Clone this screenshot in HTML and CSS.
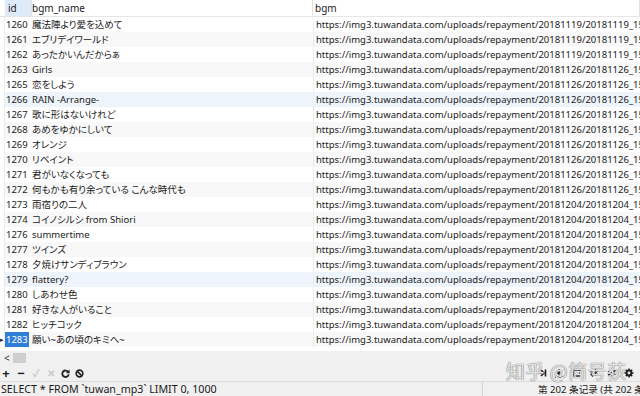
FILE: index.html
```
<!DOCTYPE html>
<html>
<head>
<meta charset="utf-8">
<link rel="stylesheet" href="styles.css">
</head>
<body>
<div class="app">
  <div class="grid">
    <div class="row head">
      <div class="ind"></div>
      <div class="c id sel">id</div>
      <div class="c name">bgm_name</div>
      <div class="c url">bgm</div>
    </div>
    <div class="row"><div class="ind"></div><div class="c id">1260</div><div class="c name">魔法陣より愛を込めて</div><div class="c url">https://img3.tuwandata.com/uploads/repayment/20181119/20181119_1549</div></div>
    <div class="row alt"><div class="ind"></div><div class="c id">1261</div><div class="c name">エブリデイワールド</div><div class="c url">https://img3.tuwandata.com/uploads/repayment/20181119/20181119_1549</div></div>
    <div class="row"><div class="ind"></div><div class="c id">1262</div><div class="c name">あったかいんだからぁ</div><div class="c url">https://img3.tuwandata.com/uploads/repayment/20181119/20181119_1549</div></div>
    <div class="row alt"><div class="ind"></div><div class="c id">1263</div><div class="c name">Girls</div><div class="c url">https://img3.tuwandata.com/uploads/repayment/20181126/20181126_1549</div></div>
    <div class="row"><div class="ind"></div><div class="c id">1265</div><div class="c name">恋をしよう</div><div class="c url">https://img3.tuwandata.com/uploads/repayment/20181126/20181126_1549</div></div>
    <div class="row hl"><div class="ind"></div><div class="c id">1266</div><div class="c name">RAIN -Arrange-</div><div class="c url">https://img3.tuwandata.com/uploads/repayment/20181126/20181126_1549</div></div>
    <div class="row"><div class="ind"></div><div class="c id">1267</div><div class="c name">歌に形はないけれど</div><div class="c url">https://img3.tuwandata.com/uploads/repayment/20181126/20181126_1549</div></div>
    <div class="row alt"><div class="ind"></div><div class="c id">1268</div><div class="c name">あめをゆかにしいて</div><div class="c url">https://img3.tuwandata.com/uploads/repayment/20181126/20181126_1549</div></div>
    <div class="row"><div class="ind"></div><div class="c id">1269</div><div class="c name">オレンジ</div><div class="c url">https://img3.tuwandata.com/uploads/repayment/20181126/20181126_1549</div></div>
    <div class="row alt"><div class="ind"></div><div class="c id">1270</div><div class="c name">リベイント</div><div class="c url">https://img3.tuwandata.com/uploads/repayment/20181126/20181126_1549</div></div>
    <div class="row"><div class="ind"></div><div class="c id">1271</div><div class="c name">君がいなくなっても</div><div class="c url">https://img3.tuwandata.com/uploads/repayment/20181126/20181126_1549</div></div>
    <div class="row alt"><div class="ind"></div><div class="c id">1272</div><div class="c name">何もかも有り余っている こんな時代も</div><div class="c url">https://img3.tuwandata.com/uploads/repayment/20181126/20181126_1549</div></div>
    <div class="row"><div class="ind"></div><div class="c id">1273</div><div class="c name">雨宿りの二人</div><div class="c url">https://img3.tuwandata.com/uploads/repayment/20181204/20181204_1549</div></div>
    <div class="row alt"><div class="ind"></div><div class="c id">1274</div><div class="c name">コイノシルシ from Shiori</div><div class="c url">https://img3.tuwandata.com/uploads/repayment/20181204/20181204_1549</div></div>
    <div class="row"><div class="ind"></div><div class="c id">1276</div><div class="c name">summertime</div><div class="c url">https://img3.tuwandata.com/uploads/repayment/20181204/20181204_1549</div></div>
    <div class="row alt"><div class="ind"></div><div class="c id">1277</div><div class="c name">ツインズ</div><div class="c url">https://img3.tuwandata.com/uploads/repayment/20181204/20181204_1549</div></div>
    <div class="row"><div class="ind"></div><div class="c id">1278</div><div class="c name">夕焼けサンディブラウン</div><div class="c url">https://img3.tuwandata.com/uploads/repayment/20181204/20181204_1549</div></div>
    <div class="row hl"><div class="ind"></div><div class="c id">1279</div><div class="c name">flattery?</div><div class="c url">https://img3.tuwandata.com/uploads/repayment/20181204/20181204_1549</div></div>
    <div class="row"><div class="ind"></div><div class="c id">1280</div><div class="c name">しあわせ色</div><div class="c url">https://img3.tuwandata.com/uploads/repayment/20181204/20181204_1549</div></div>
    <div class="row alt"><div class="ind"></div><div class="c id">1281</div><div class="c name">好きな人がいること</div><div class="c url">https://img3.tuwandata.com/uploads/repayment/20181204/20181204_1549</div></div>
    <div class="row"><div class="ind"></div><div class="c id">1282</div><div class="c name">ヒッチコック</div><div class="c url">https://img3.tuwandata.com/uploads/repayment/20181204/20181204_1549</div></div>
    <div class="row alt"><div class="ind cur">&#9656;</div><div class="c id"><span class="pick">1283</span></div><div class="c name">願い~あの頃のキミへ~</div><div class="c url">https://img3.tuwandata.com/uploads/repayment/20181204/20181204_1549</div></div>
  </div>
  <div class="hscroll">
    <span class="arr">&lt;</span><span class="thumb"></span>
  </div>
  <div class="toolbar">
    <div class="tools">
      <span class="t add">+</span>
      <span class="t del">&minus;</span>
      <span class="t dim">&#10003;</span>
      <span class="t dim">&#10005;</span>
      <svg class="ico" viewBox="0 0 10 10" width="9" height="9"><path d="M8 3.2A3.6 3.6 0 1 0 8.6 6" fill="none" stroke="#222" stroke-width="2"/><path d="M9.6 0.6v4h-4z" fill="#222"/></svg>
      <svg class="ico" viewBox="0 0 10 10" width="9" height="9"><circle cx="5" cy="5" r="3.7" fill="none" stroke="#222" stroke-width="1.8"/><path d="M2.6 2.6l4.8 4.8" stroke="#222" stroke-width="1.8"/></svg>
    </div>
    <div class="right-tools">
      <svg class="ico" viewBox="0 0 10 10" width="10" height="10"><path d="M1 5h6M4 2l3 3-3 3" stroke="#222" stroke-width="1.6" fill="none"/><path d="M8.5 1.5v7" stroke="#222" stroke-width="1.6"/></svg>
      <svg class="ico" viewBox="0 0 10 10" width="10" height="10"><path d="M5 1v5M2.5 3.5L5 6l2.5-2.5M1 9h8" stroke="#222" stroke-width="1.6" fill="none"/></svg>
      <svg class="ico" viewBox="0 0 10 10" width="10" height="10"><path d="M2 2h6v6H2z" fill="none" stroke="#222" stroke-width="1.4"/></svg>
      <svg class="ico" viewBox="0 0 10 10" width="10" height="10"><path d="M1 3.5h7M6 1.5l2 2-2 2M9 6.5H2M4 4.5l-2 2 2 2" stroke="#222" stroke-width="1.3" fill="none"/></svg>
      <svg class="ico" viewBox="0 0 10 10" width="10" height="10"><path d="M1 4c2-2 3 2 5 0s2-1 3-1M1 7c2-2 3 2 5 0s2-1 3-1" stroke="#222" stroke-width="1.4" fill="none"/></svg>
      <svg class="ico" viewBox="0 0 10 10" width="10" height="10"><circle cx="5" cy="5" r="2.4" fill="none" stroke="#222" stroke-width="2"/><path d="M5 0.5v2M5 7.5v2M0.5 5h2M7.5 5h2M1.8 1.8l1.4 1.4M6.8 6.8l1.4 1.4M8.2 1.8L6.8 3.2M3.2 6.8L1.8 8.2" stroke="#222" stroke-width="1.6"/></svg>
    </div>
    <div class="mark">知乎 @简号荻</div>
  </div>
  <div class="status">
    <div class="sql">SELECT * FROM `tuwan_mp3` LIMIT 0, 1000</div>
    <div class="seg"></div>
    <div class="rec">第 202 条记录 (共 202 条)</div>
  </div>
</div>
</body>
</html>
```

FILE: styles.css
```
* { box-sizing: border-box; }
html, body { margin: 0; padding: 0; }
body {
  width: 640px;
  height: 396px;
  overflow: hidden;
  background: #f0f0f0;
  font-family: "Noto Sans", "Noto Sans CJK JP", sans-serif;
  font-size: 9.5px;
  color: #1a1a1a;
}
.app { display: flex; flex-direction: column; height: 396px; }
.grid { background: #fff; height: 351px; overflow: hidden; flex-shrink: 0; }
.row {
  display: grid;
  grid-template-columns: 5px 27px 281px 1fr;
  height: 15px;
  line-height: 15px;
  white-space: nowrap;
}
.row.alt { background: #f8f8f8; }
.row.hl { background: #eef4fb; }
.row.head { height: 17px; line-height: 17px; background: #fff; border-bottom: 1px solid #e6e6e6; font-size: 10px; }
.head .c { border-right: 1px solid #e2e2e2; }
.head .c.sel { background: #dfeaf8; padding-left: 3px; }
.c { overflow: hidden; padding-left: 1px; }
.c.name { padding-left: 0; font-feature-settings: "palt"; }
.c.url { padding-left: 2px; border-left: 1px solid #ececec; }
.head .c.url { border-left: none; }
.ind { background: #fff; font-size: 7px; color: #222; line-height: 15px; border-right: 1px solid #ececec; }
.head .ind { border-right: none; }
.pick { background: #2f7fd6; color: #fff; display: inline-block; padding: 0 1px; margin-left: -1px; }
.hscroll {
  height: 14px;
  display: flex;
  align-items: center;
  gap: 3px;
  padding-left: 4px;
  color: #333;
}
.arr { font-size: 10px; }
.thumb { width: 13px; height: 10px; background: #cfcfcf; }
.toolbar {
  height: 16px;
  display: flex;
  align-items: center;
  justify-content: space-between;
  padding: 0 6px 0 1px;
  position: relative;
}
.tools { display: flex; align-items: center; gap: 5px; }
.t { font-size: 13px; font-weight: bold; width: 10px; text-align: center; line-height: 14px; }
.t.dim { color: #c8c8c8; font-size: 10px; }
.right-tools { display: flex; align-items: center; gap: 7.5px; }
.mark {
  position: absolute;
  left: 506px;
  top: -8px;
  font-size: 19px;
  color: rgba(255,255,255,0.8);
  text-shadow: 0 0 1px #777, 0 0 1px #777;
  letter-spacing: 0.5px;
  pointer-events: none;
  font-family: "Noto Sans CJK SC", sans-serif;
}
.status {
  height: 15px;
  display: flex;
  align-items: center;
  border-top: 1px solid #dcdcdc;
  background: #f0f0f0;
  white-space: nowrap;
  overflow: hidden;
  font-size: 10.7px;
}
.sql { width: 482px; flex-shrink: 0; padding-left: 1px; }
.seg { width: 1px; flex-shrink: 0; height: 15px; background: #d6d6d6; }
.rec { padding-left: 55px; font-size: 9.6px; flex-shrink: 0; }
```
